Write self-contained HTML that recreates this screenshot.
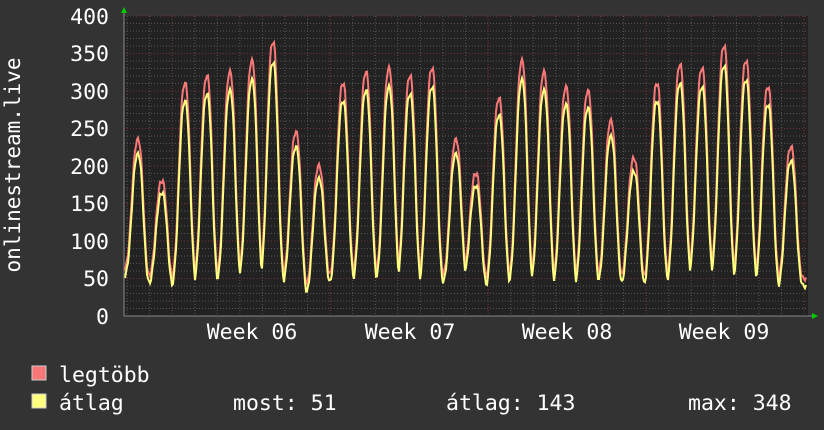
<!DOCTYPE html>
<html><head><meta charset="utf-8"><style>
html,body{margin:0;padding:0;background:#333;width:824px;height:430px;overflow:hidden}
svg{display:block}
text{font-family:"DejaVu Sans Mono","Liberation Mono",monospace;fill:#fff}
</style></head><body>
<svg id="s" width="824" height="430" xmlns="http://www.w3.org/2000/svg">
<rect x="0" y="0" width="824" height="430" fill="#333"/>
<rect x="124" y="16" width="684" height="300" fill="#222"/>
<g id="grid"></g>
<g id="data"></g>
<line x1="124" y1="316" x2="812" y2="316" stroke="#888" stroke-width="1"/>
<line x1="124" y1="12" x2="124" y2="316" stroke="#888" stroke-width="1"/>
<polygon points="121,13 127,13 124,7" fill="#0c0"/>
<polygon points="812,313 812,319 818,316" fill="#0c0"/>
<g font-size="21.5" text-anchor="end">
<text x="109" y="24">400</text><text x="109" y="61">350</text><text x="109" y="99">300</text>
<text x="109" y="136">250</text><text x="109" y="174">200</text><text x="109" y="211">150</text>
<text x="109" y="249">100</text><text x="109" y="286">50</text><text x="109" y="324">0</text>
</g>
<text x="0" y="0" font-size="21" text-anchor="middle" transform="translate(20,165) rotate(-90)">onlinestream.live</text>
<g font-size="21.5" text-anchor="middle">
<text x="252" y="339">Week 06</text><text x="410" y="339">Week 07</text>
<text x="567" y="339">Week 08</text><text x="724" y="339">Week 09</text>
</g>
<rect x="32" y="366" width="14" height="14" fill="#f87878" stroke="#ccc" stroke-width="1"/>
<rect x="32" y="394" width="14" height="14" fill="#ffff80" stroke="#ccc" stroke-width="1"/>
<g font-size="21.5">
<text x="59" y="382">legtöbb</text>
<text x="59" y="410">átlag</text>
<text x="233" y="410">most: 51</text>
<text x="446" y="410">átlag: 143</text>
<text x="688" y="410">max: 348</text>
</g>
</svg>
<script>
var ns="http://www.w3.org/2000/svg";
function el(p,t,a){var e=document.createElementNS(ns,t);for(var k in a)e.setAttribute(k,a[k]);p.appendChild(e);return e;}
var g=document.getElementById('grid');
for(var v=10;v<400;v+=10){if(v%50==0)continue;var y=316-v*0.75;el(g,'line',{x1:124,x2:808,y1:y,y2:y,stroke:'#555','stroke-dasharray':'1,2'});}
for(var x=127;x<808;x+=22.57){el(g,'line',{x1:x,x2:x,y1:16,y2:316,stroke:'#555','stroke-dasharray':'1,2'});}
for(var v=50;v<=400;v+=50){var y=316-v*0.75;el(g,'line',{x1:124,x2:808,y1:y,y2:y,stroke:'#733','stroke-dasharray':'1,2'});}
[172,330,488,646,804].forEach(function(x){el(g,'line',{x1:x,x2:x,y1:16,y2:316,stroke:'#733','stroke-dasharray':'1,2'});});
var pk=[[138,235],[162,180],[185,310],[207,320],[230,325],[252,340],[273,365],[296,245],[319,200],[343,310],[366,325],[389,330],[410,320],[432,330],[456,235],[476,190],[499,290],[522,340],[544,325],[566,305],[588,300],[611,260],[634,210],[657,310],[680,335],[702,330],[724,360],[746,340],[768,305],[791,225]];
var tr=[60,50,45,48,50,55,52,50,35,50,52,52,50,48,50,55,45,48,50,45,45,50,48,45,50,60,60,52,50,45,50];
function val(x){
 var best=0;
 for(var i=0;i<pk.length;i++){var d=x-pk[i][0];var w=d<0?7:6;var q=Math.abs(d/w);var f=Math.exp(-Math.pow(q,2.6)*0.8);var t=(d<0?tr[i]:tr[i+1]);var v=t+(pk[i][1]-t)*f; if(f>0.01) best=Math.max(best,v);}
 if(best==0){var i=0;while(i<pk.length-1&&pk[i+1][0]<x)i++;best=tr[i+1]||50;}
 return best+(Math.sin(x*1.7)*3);
}
var d=document.getElementById('data');
var r="",yv="";
for(var x=125;x<=806;x++){var v=val(x);v=Math.max(30,v);var a=v<80?v-10:(70+(v-80)*0.94);
 r+=(x==125?"M":"L")+x+","+(316-v*0.75).toFixed(1);
 yv+=(x==125?"M":"L")+x+","+(316-a*0.75).toFixed(1);}
el(d,'path',{d:r,fill:'none',stroke:'#f87878','stroke-width':2});
el(d,'path',{d:yv,fill:'none',stroke:'#ffff80','stroke-width':2});
</script>
</body></html>
